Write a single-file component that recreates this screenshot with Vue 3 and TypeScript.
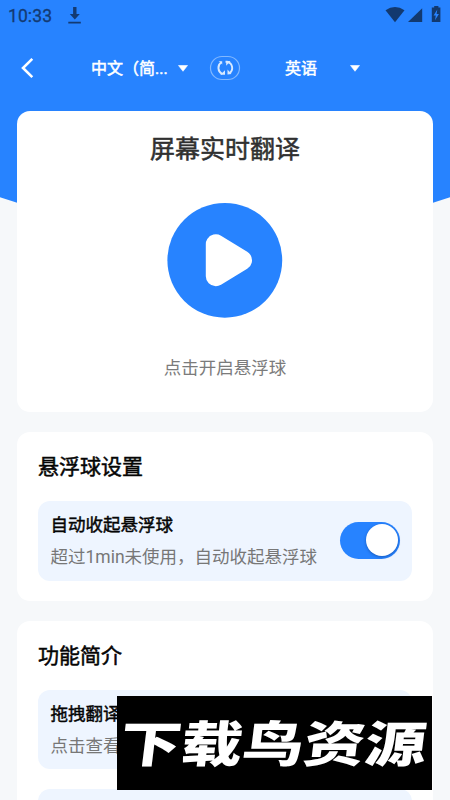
<script setup lang="ts">
import { ref } from 'vue'

interface Feature {
  title: string
  hint: string
}

const autoCollapse = ref<boolean>(true)
const features: Feature[] = [
  { title: '拖拽翻译', hint: '点击查看' },
  { title: '', hint: '' },
]
</script>

<template>
  <div class="screen">
    <svg class="backdrop" viewBox="0 0 450 270" aria-hidden="true">
      <path d="M0 0H450V197.200Q340 235 225 235Q110 235 0 197.200Z" fill="#2783ff" />
    </svg>

    <header class="status">
      <span class="clock">10:33</span>
      <svg class="download" width="14" height="18" viewBox="0 0 14 18">
        <path d="M5.100 0h3.400v7h3.300L6.800 12.500 1.800 7h3.300zM.3 14.800h12.500v1.700H.3z" fill="#133a72" />
      </svg>
      <svg class="signals" width="57" height="18" viewBox="0 0 57 18">
        <g fill="#12396f">
          <path d="M0.500 4.200Q10 -2 19.500 4.200L10 16.300Z" />
          <path d="M23 16L37.200 2.300V16Z" />
          <path d="M49.200 0h4.200v1.600h2V16h-8.600V1.600h2.400z" />
        </g>
        <path d="M52.300 3.600l-3.700 5.800h2.200L50 14.200l3.900-6.300h-2.300z" fill="#2783ff" />
      </svg>
    </header>

    <nav class="bar">
      <button class="back" aria-label="返回">
        <svg width="14" height="22" viewBox="0 0 14 22">
          <path d="M12.300 1.800L3 11L12.300 20.200" fill="none" stroke="#fff" stroke-width="2.600" />
        </svg>
      </button>
      <span class="lang source">中文（简...</span>
      <svg class="caret" width="10" height="7" viewBox="0 0 10 7"><path d="M.5 .5H9.500L5 6.300Z" fill="#fff" stroke="#fff" stroke-width=".6" stroke-linejoin="round" /></svg>
      <button class="swap" aria-label="交换">
        <svg width="32" height="26" viewBox="0 0 32 26">
          <rect x="1.500" y="1.500" width="29" height="23" rx="11.500" fill="none" stroke="#82b8ff" stroke-width="1.200" />
          <g fill="none" stroke="#d6e8ff" stroke-width="1.900">
            <path d="M12.300 7.300A6.800 6.800 0 0 0 13.300 19" />
            <path d="M16.500 6.800H18.500A6.500 6.500 0 0 1 20.500 18.300" />
          </g>
          <path d="M11.200 7.300L9.500 6.200H13.200V9.500ZM11.200 19.700H16V15.200ZM17.200 6V10.800L21.500 6ZM18.500 14.500V19.600L22.500 19Z" fill="#d6e8ff" />
        </svg>
      </button>
      <span class="lang target">英语</span>
      <svg class="caret" width="10" height="7" viewBox="0 0 10 7"><path d="M.5 .5H9.500L5 6.300Z" fill="#fff" stroke="#fff" stroke-width=".6" stroke-linejoin="round" /></svg>
    </nav>

    <main class="content">
      <section class="card hero">
        <h1>屏幕实时翻译</h1>
        <button class="play" aria-label="开启">
          <svg width="116" height="116" viewBox="0 0 116 116">
            <circle cx="57.800" cy="58.300" r="57.400" fill="#2783ff" />
            <path d="M48.800 42.300V74.300L75 58.300Z" fill="#fff" stroke="#fff" stroke-width="20" stroke-linejoin="round" />
          </svg>
        </button>
        <p>点击开启悬浮球</p>
      </section>

      <section class="card">
        <h2>悬浮球设置</h2>
        <div class="row">
          <div class="copy">
            <h3>自动收起悬浮球</h3>
            <p>超过1min未使用，自动收起悬浮球</p>
          </div>
          <button class="switch" :class="{ on: autoCollapse }" role="switch" :aria-checked="autoCollapse" @click="autoCollapse = !autoCollapse">
            <span class="knob"></span>
          </button>
        </div>
      </section>

      <section class="card">
        <h2>功能简介</h2>
        <div v-for="(item, i) in features" :key="i" class="row">
          <div class="copy">
            <h3>{{ item.title }}</h3>
            <p>{{ item.hint }}</p>
          </div>
        </div>
      </section>
    </main>

    <div class="watermark">
      <svg width="315" height="94" viewBox="0 0 315 94">
        <text transform="translate(1 65.500) skewX(-7) scale(1.250 1)" x="0" y="0">下载鸟资源</text>
      </svg>
    </div>
  </div>
</template>

<style>
body {
  margin: 0;
  overflow: hidden;
}
</style>

<style scoped>
.screen {
  position: relative;
  box-sizing: border-box;
  width: 450px;
  height: 800px;
  overflow: hidden;
  background: #f6f8fa;
  font-family: Roboto, "Noto Sans CJK SC", sans-serif;
  color: #050505;
}
h1, h2, h3, p {
  margin: 0;
  font-weight: 400;
}
button {
  display: block;
  padding: 0;
  border: 0;
  background: none;
}
svg {
  display: block;
}
.backdrop {
  position: absolute;
  top: 0;
  left: 0;
  width: 450px;
  height: 270px;
}
.status {
  position: relative;
  display: flex;
  align-items: flex-start;
  height: 32px;
  padding: 0 8px;
  box-sizing: border-box;
}
.clock {
  margin-top: 6px;
  width: 60px;
  font-size: 17.500px;
  line-height: 20px;
  letter-spacing: 0.100px;
  color: #133a72;
  -webkit-text-stroke: 0.300px #133a72;
}
.download {
  margin-top: 7px;
}
.signals {
  margin: 6px 0 0 auto;
}
.bar {
  position: relative;
  display: flex;
  align-items: center;
  height: 72px;
  padding-left: 20px;
}
.back {
  width: 71px;
}
.lang {
  padding-top: 1px;
  font-size: 16px;
  line-height: 24px;
  color: #fff;
  white-space: nowrap;
  -webkit-text-stroke: 0.500px #fff;
}
.source {
  width: 87px;
}
.swap {
  margin: 0 44px 0 21px;
}
.target {
  width: 65px;
}
.content {
  position: relative;
  display: flex;
  flex-direction: column;
  gap: 20px;
  padding: 7px 17px 0;
}
.card {
  display: flex;
  flex-direction: column;
  gap: 20px;
  padding: 20px 21px;
  border-radius: 13px;
  background: #fff;
}
.hero {
  box-sizing: border-box;
  height: 301px;
  align-items: center;
  gap: 0;
}
.hero h1 {
  padding-top: 1px;
  font-size: 25px;
  line-height: 36px;
  color: #303030;
  -webkit-text-stroke: 0.500px #303030;
}
.play {
  margin-top: 34px;
}
.hero p {
  margin-top: 37px;
  font-size: 17.500px;
  line-height: 26px;
  color: #7b7b7b;
}
h2 {
  box-sizing: border-box;
  height: 29px;
  padding-top: 1px;
  font-size: 21px;
  line-height: 29px;
  -webkit-text-stroke: 0.500px #050505;
}
.row {
  box-sizing: border-box;
  display: flex;
  align-items: center;
  justify-content: space-between;
  height: 79.500px;
  padding: 0 12px 0 12.500px;
  border-radius: 12px;
  background: #eef5ff;
}
.copy {
  padding-top: 2px;
}
.copy h3 {
  height: 31px;
  font-size: 17.500px;
  line-height: 31px;
  -webkit-text-stroke: 0.450px #050505;
}
.copy p {
  height: 32px;
  font-size: 17.500px;
  line-height: 32px;
  white-space: nowrap;
  color: #777;
}
.switch {
  display: flex;
  align-items: center;
  box-sizing: border-box;
  width: 60px;
  height: 37px;
  margin-bottom: 1px;
  padding: 0 2px;
  border-radius: 19px;
  background: #c8cdd5;
}
.switch.on {
  justify-content: flex-end;
  background: #2783ff;
}
.knob {
  width: 32px;
  height: 32px;
  border-radius: 50%;
  background: #fff;
  box-shadow: 0 1px 3px rgba(0, 30, 90, 0.4);
}
.watermark {
  position: absolute;
  left: 117px;
  top: 696px;
  width: 315px;
  height: 94px;
  background: #000;
}
.watermark text {
  font-family: "Noto Sans CJK SC", sans-serif;
  font-size: 49px;
  font-weight: 900;
  fill: #fff;
}
</style>
